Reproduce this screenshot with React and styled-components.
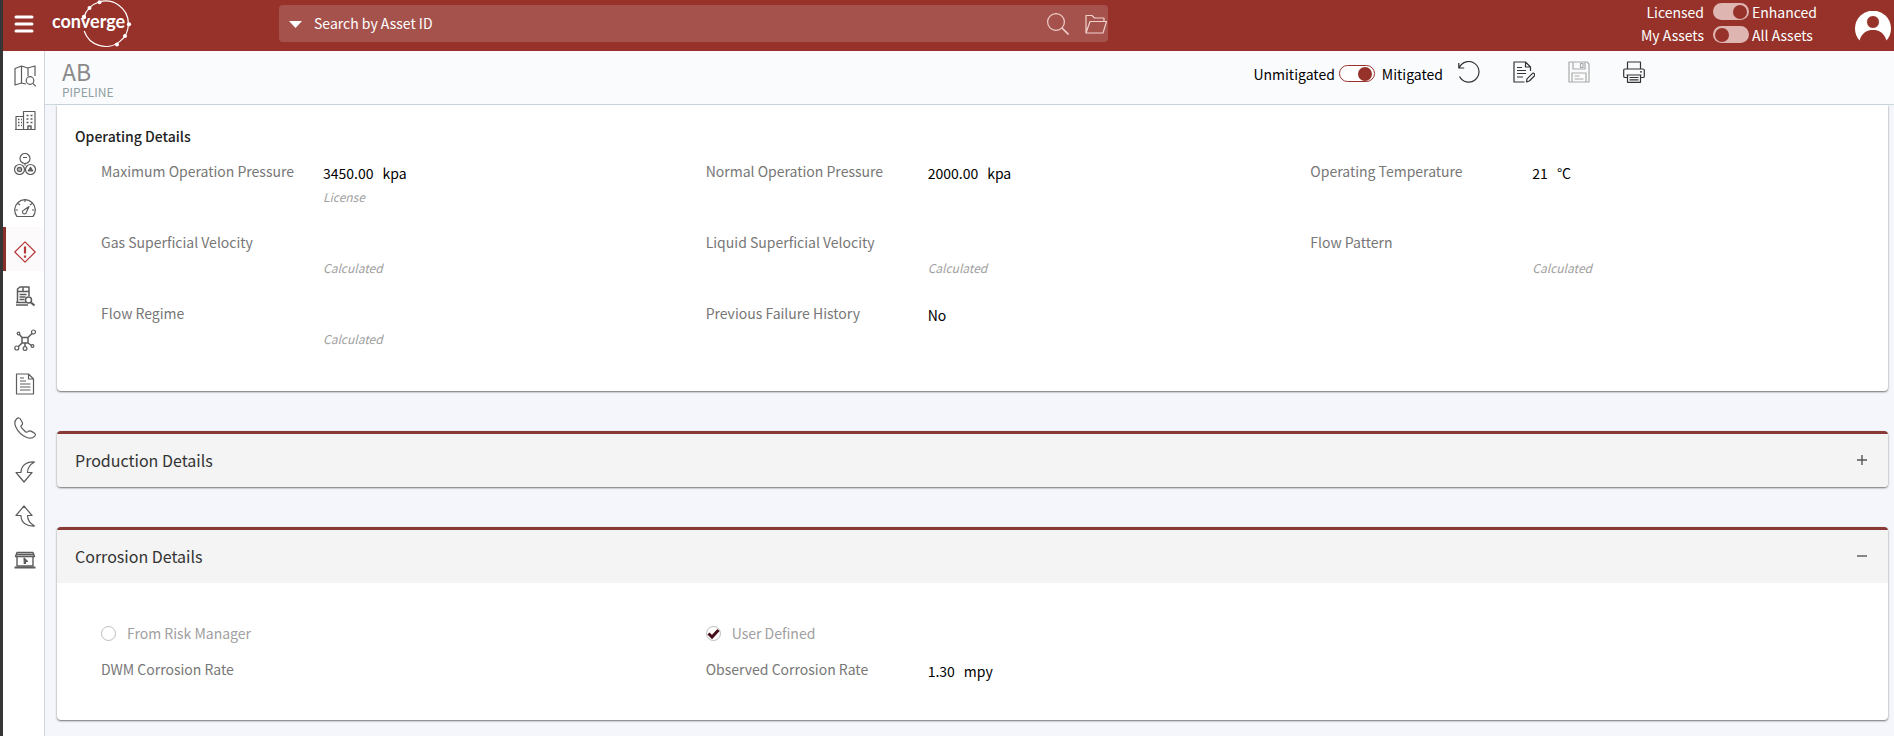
import { useState } from "react";
import styled, { createGlobalStyle } from "styled-components";


const GlobalStyle = createGlobalStyle`
  * {
    box-sizing: border-box;
  }

  body {
    margin: 0;
    background: #f5f6fb;
    color: #000;
    font-family: "Noto Sans CJK SC", "Open Sans", sans-serif;
    font-size: 14px;
    line-height: 20px;
  }

  button, input {
    font: inherit;
    color: inherit;
  }

  svg {
    display: block;
  }
`;

const Page = styled.div`
  display: flex;
  flex-direction: column;
  min-height: 100vh;
  border-left: 3px solid #353535;
`;

const TopBar = styled.header`
  display: flex;
  align-items: center;
  height: 51px;
  padding-right: 3px;
  background: #96322a;
  color: #fff;
`;

const IconButton = styled.button`
  display: flex;
  align-items: center;
  justify-content: center;
  padding: 0;
  border: 0;
  background: none;
  color: ${(props) => props.$color || "inherit"};
  cursor: pointer;

  &:disabled {
    cursor: default;
  }
`;

const MenuButton = styled(IconButton)`
  width: 42px;
  height: 51px;
  padding-bottom: 3px;
`;

const LogoLink = styled.a`
  width: 90px;
  margin-left: 4px;
  color: #fff;
`;

const SearchBox = styled.form`
  display: flex;
  align-items: center;
  flex: 0 1 829px;
  height: 37px;
  margin: 0 auto 4px 140px;
  padding-left: 10px;
  border-radius: 4px;
  background: rgba(255, 255, 255, 0.16);
  color: #f0cfcb;
`;

const SearchInput = styled.input`
  flex: 1;
  min-width: 0;
  height: 37px;
  padding: 0 0 2px 12px;
  border: 0;
  outline: 0;
  background: none;
  color: #fff;

  &::placeholder {
    color: #fff;
    opacity: 1;
  }
`;

const SearchActions = styled.div`
  display: flex;
  gap: 16px;
  padding-right: 1px;
`;

const SwitchGrid = styled.div`
  display: grid;
  grid-template-columns: auto 36px auto;
  grid-auto-rows: 23px;
  align-items: center;
  height: 100%;
  margin-right: 38px;
  white-space: nowrap;
`;

const SwitchLabel = styled.label`
  text-align: ${(props) => (props.$before ? "right" : "left")};
  padding: ${(props) => (props.$before ? "0 9px 0 0" : "0 0 0 3px")};
`;

const Switch = styled.input.attrs({ type: "checkbox", role: "switch" })`
  appearance: none;
  display: flex;
  align-items: center;
  justify-content: ${(props) => (props.checked ? "flex-end" : "flex-start")};
  width: 36px;
  height: 17px;
  margin: 0;
  padding: 0 2px;
  border: ${(props) => (props.$outlined ? "1px solid #96322a" : "0")};
  border-radius: 9px;
  background: ${(props) => (props.$outlined ? "#fff" : "#dfb5b2")};
  cursor: pointer;

  &::before {
    content: "";
    width: 14px;
    height: 14px;
    border-radius: 50%;
    background: #96322a;
  }
`;

const Body = styled.div`
  display: flex;
  flex: 1;
`;

const SideNav = styled.nav`
  width: 42px;
  flex: none;
  border-right: 1px solid #cfd6db;
  background: #fff;
`;

const NavItem = styled.a`
  display: flex;
  justify-content: center;
  height: 44px;
  padding: 14px 0 0 3px;
  background: ${(props) => (props.$active ? "#fcfafa" : "none")};
  box-shadow: ${(props) => (props.$active ? "inset 3px 0 #8b2f2a" : "none")};
  color: ${(props) => (props.$active ? "#b5383a" : "#5c5c5c")};
`;

const Main = styled.main`
  flex: 1;
  min-width: 0;
`;

const AssetBar = styled.div`
  display: flex;
  align-items: center;
  height: 54px;
  padding: 0 249px 0 17px;
  border-bottom: 1px solid #cdd7de;
  background: #fafbfd;
`;

const AssetTitle = styled.div`
  flex: 1;
  padding-top: 2px;
`;

const AssetName = styled.h1`
  margin: 0;
  color: #8a8a8a;
  font-size: 23px;
  font-weight: 400;
  line-height: 26px;
`;

const AssetType = styled.div`
  color: #90a0a4;
  font-size: 12px;
  line-height: 16px;
`;

const Mitigation = styled.div`
  display: flex;
  align-items: center;
  gap: 4px;
  margin-right: 15px;
  padding-bottom: 8px;
`;

const Toolbar = styled.div`
  display: flex;
  gap: 33px;
  padding-bottom: 11px;
`;

const Cards = styled.div`
  display: flex;
  flex-direction: column;
  gap: 40px;
  padding: 0 6px 14px 12px;
`;

const Card = styled.section`
  border-top: ${(props) => (props.$open ? "0" : "3px solid #8a3a36")};
  border-radius: ${(props) => (props.$open ? "0 0 4px 4px" : "4px")};
  background: #fff;
  box-shadow: 0 1px 2px rgba(0, 0, 0, 0.55);
`;

const CardHeader = styled.div`
  display: flex;
  align-items: center;
  justify-content: space-between;
  height: 53px;
  padding: 0 18px 2px;
  border-radius: ${(props) => (props.$expanded ? "0" : "0 0 4px 4px")};
  background: #f4f4f4;
  color: #333;
`;

const CardTitle = styled.h2`
  margin: 0;
  font-size: 16px;
  font-weight: 400;
  line-height: 24px;
`;

const SectionTitle = styled.h3`
  margin: 0;
  padding: 21px 18px 0;
  color: #222;
  font-size: 14px;
  font-weight: 500;
`;

const Fields = styled.dl`
  display: grid;
  grid-template-columns: repeat(3, 1fr);
  grid-auto-rows: ${(props) => props.$row}px;
  margin: 0;
  padding: ${(props) => props.$pad};
`;

const FieldBox = styled.div`
  display: flex;
  padding-left: 30px;
`;

const FieldName = styled.dt`
  width: 222px;
  flex: none;
  color: #777;
`;

const FieldValue = styled.dd`
  margin: 0;
  padding-top: 2px;
`;

const Amount = styled.div`
  display: flex;
  gap: 9px;
  height: 20px;
`;

const Source = styled.div`
  color: #a0a0a0;
  font-size: 12px;
  font-style: italic;
  line-height: 28px;
`;

const Choices = styled.div`
  display: grid;
  grid-template-columns: repeat(3, 1fr);
  padding: 40px 3px 0 14px;
`;

const Choice = styled.label`
  display: flex;
  align-items: center;
  gap: 11px;
  padding-left: 30px;
  color: #a0a0a0;
`;

const RadioBox = styled.span`
  display: grid;
  place-items: center;

  > * {
    grid-area: 1 / 1;
  }
`;

const Radio = styled.input.attrs({ type: "radio" })`
  appearance: none;
  width: 15px;
  height: 15px;
  margin: 0;
  border: 1px solid #bdbdbd;
  border-radius: 50%;
  background: #fff;
`;

const Icon = ({ size = 22, width = 1.2, children }) => (
  <svg
    width={size}
    height={size}
    viewBox="0 0 22 22"
    fill="none"
    stroke="currentColor"
    strokeWidth={width}
    strokeLinejoin="round"
    aria-hidden="true"
  >
    {children}
  </svg>
);

const Logo = () => (
  <svg width="90" height="51" viewBox="0 0 90 51" role="img" aria-label="converge">
    <path
      d="M35.200 31A22.700 22.700 0 1 0 35 17"
      fill="none"
      stroke="#fff"
      strokeWidth="1.200"
    />
    <g fill="#fff">
      <circle cx="35" cy="17" r="2.200" />
      <circle cx="40.500" cy="8" r="2" />
      <circle cx="50.500" cy="2.300" r="2" />
      <circle cx="80" cy="24.300" r="2.100" />
      <circle cx="76" cy="36" r="2" />
      <circle cx="68" cy="44.500" r="2" />
      <text x="3" y="28" fontFamily="Lato, sans-serif" fontSize="18" fontWeight="700">
        converge
      </text>
    </g>
  </svg>
);

const navItems = [
  {
    label: "Map",
    icon: (
      <>
        <path d="M12 19 7.500 18 1 20V3.500L7.500 1l6 2L21 1v10M7.500 1v17M14 3v8" />
        <circle cx="16" cy="15.500" r="3.800" />
        <path d="m18.800 18.300 3 3" />
      </>
    ),
  },
  {
    label: "Facilities",
    icon: (
      <>
        <path d="M2 20.500V7.500h7.500M9.500 20.500v-18H21v18zM1 20.500h20" />
        <path d="M4 10.500h1.500M7 10.500h1M4 13.500h1.500M7 13.500h1M4 16.500h1.500M7 16.500h1M12.500 6.500h2M16.500 6.500h2M12.500 10h2M16.500 10h2M12.500 13.500h2M16.500 13.500h2M14 20v-3h3v3" strokeWidth="1.500" />
      </>
    ),
  },
  {
    label: "Groups",
    icon: (
      <>
        <circle cx="11" cy="5.500" r="5" />
        <circle cx="5.500" cy="16.500" r="5" />
        <circle cx="16.500" cy="16.500" r="5" />
        <path d="M9 4.500h4M11 10.500v2" />
        <circle cx="5.500" cy="16.500" r="2.200" fill="currentColor" fillOpacity="0.5" />
        <path d="m14.300 17.800 2.200-3.600 2.200 3.600z" fill="currentColor" />
      </>
    ),
  },
  {
    label: "Dashboard",
    icon: (
      <>
        <path d="M3 19.500A10.300 10.300 0 1 1 19 19.500z" />
        <path d="M11 2v3M4 6.500l2 1.500M18 6.500l-2 1.500M1.500 13h2.500M20.500 13H18" />
        <path d="M15 9.500 10 13a2 2 0 1 0 2.500 2z" />
      </>
    ),
  },
  {
    label: "Risk",
    active: true,
    icon: (
      <>
        <path d="M11 .8 21.200 11 11 21.200.800 11z" />
        <path d="M11 5.500v7" strokeWidth="2.200" />
        <path d="M11 14.500v2.200" strokeWidth="2.200" />
      </>
    ),
  },
  {
    label: "Reports",
    icon: (
      <>
        <path d="M3.500 17V4l2.500-2h9v9M2 17.500h10M2 20h12" strokeWidth="1.500" />
        <path d="M3.500 6.500h11.500M5.500 9.500h7M5.500 12h6M5.500 14.500h5M9 2v4" strokeWidth="1.500" />
        <circle cx="14.500" cy="15" r="3" strokeWidth="1.500" />
        <path d="m17 17.500 3.500 3" strokeWidth="2.200" />
      </>
    ),
  },
  {
    label: "Network",
    icon: (
      <>
        <path d="M8 8.500h6v5.500H8zM14 8.500l4-4M8 8.500l-2.500-3M8 14l-4 4M14 14l3.500 2.500M11 14v3.500" strokeWidth="1.500" />
        <circle cx="19.500" cy="3" r="2" />
        <circle cx="4.500" cy="4.500" r="1.300" />
        <circle cx="2.800" cy="19" r="2" />
        <circle cx="11" cy="19.500" r="1.900" />
        <circle cx="18.500" cy="17" r="1.400" />
      </>
    ),
  },
  {
    label: "Documents",
    icon: (
      <>
        <path d="M2.500 1h12l5 5v15h-17zM14.500 1v5h5" />
        <path d="M6 8h6M6 11h10.500M6 14h10.500M6 17h10.500M6 5h4" />
      </>
    ),
  },
  {
    label: "Contacts",
    icon: (
      <path d="M2.500 2C4 .5 5.700.700 6.500 2.200L8.300 5.500c.6 1.200.2 2-.7 2.800-.9.800-.8 1.600 0 2.600l3.600 3.600c1 .9 1.900 1 2.700.2.900-1 1.800-1.200 3-.6l3.300 1.800c1.500.9 1.500 2.300.3 3.500-2 2-4.900 2.300-8.200.9-4.500-2-8.500-6-10.600-10.600C.400 6.700.600 4 2.500 2z" />
    ),
  },
  {
    label: "Import",
    icon: <path d="M20.500 1C13 .5 7 4 7 11.500H2L10 21l8-9.500h-4.500C13.500 7 16 3.500 20.500 1z" />,
  },
  {
    label: "Export",
    icon: <path d="M20.500 21C13 21.500 7 18 7 10.500H2L10 1l8 9.500h-4.500C13.500 15 16 18.500 20.500 21z" />,
  },
  {
    label: "Console",
    icon: (
      <>
        <path d="M3 3.500h16l1.500 4h-19zM3 7.500v9.500h16V7.500M2 5.500h18" strokeWidth="1.400" />
        <path d="M.5 18.500h21" strokeWidth="2" />
        <path d="m10 9 3.500 3.500h-2v2h-1.200z" fill="currentColor" />
      </>
    ),
  },
];

const operatingFields = [
  { name: "Maximum Operation Pressure", value: "3450.00", unit: "kpa", source: "License" },
  { name: "Normal Operation Pressure", value: "2000.00", unit: "kpa" },
  { name: "Operating Temperature", value: "21", unit: "°C" },
  { name: "Gas Superficial Velocity", source: "Calculated" },
  { name: "Liquid Superficial Velocity", source: "Calculated" },
  { name: "Flow Pattern", source: "Calculated" },
  { name: "Flow Regime", source: "Calculated" },
  { name: "Previous Failure History", value: "No" },
];

const corrosionFields = [
  { name: "DWM Corrosion Rate" },
  { name: "Observed Corrosion Rate", value: "1.30", unit: "mpy" },
];

const Field = ({ name, value, unit, source }) => (
  <FieldBox>
    <FieldName>{name}</FieldName>
    <FieldValue>
      <Amount>
        {value && <span>{value}</span>}
        {unit && <span>{unit}</span>}
      </Amount>
      {source && <Source>{source}</Source>}
    </FieldValue>
  </FieldBox>
);

const App = () => {
  const [enhanced, setEnhanced] = useState(true);
  const [allAssets, setAllAssets] = useState(false);
  const [mitigated, setMitigated] = useState(true);

  return (
    <Page>
      <GlobalStyle />
      <TopBar>
        <MenuButton aria-label="Menu">
          <svg width="20" height="18" viewBox="0 0 20 18" stroke="#fff" strokeWidth="3" strokeLinecap="round">
            <path d="M2 2h16M2 9h16M2 16h16" />
          </svg>
        </MenuButton>
        <LogoLink href="#home">
          <Logo />
        </LogoLink>
        <SearchBox onSubmit={(e) => e.preventDefault()}>
          <IconButton type="button" aria-label="Search type" $color="#fff">
            <svg width="13" height="8" viewBox="0 0 13 8" fill="currentColor">
              <path d="M0 1h13L6.500 8z" />
            </svg>
          </IconButton>
          <SearchInput aria-label="Search by Asset ID" placeholder="Search by Asset ID" />
          <SearchActions>
            <IconButton aria-label="Search">
              <Icon>
                <circle cx="9" cy="9" r="8.400" />
                <path d="m15 15 6.500 6.500" strokeWidth="1.600" />
              </Icon>
            </IconButton>
            <IconButton type="button" aria-label="Open folder">
              <Icon>
                <path d="M1 20V2.500h6l2.500 2.500H19v3.500M1 20 5 8.500h16.500L18 20z" />
              </Icon>
            </IconButton>
          </SearchActions>
        </SearchBox>
        <SwitchGrid>
          <SwitchLabel htmlFor="enhanced" $before>Licensed</SwitchLabel>
          <Switch id="enhanced" checked={enhanced} onChange={() => setEnhanced(!enhanced)} />
          <SwitchLabel htmlFor="enhanced">Enhanced</SwitchLabel>
          <SwitchLabel htmlFor="all-assets" $before>My Assets</SwitchLabel>
          <Switch id="all-assets" checked={allAssets} onChange={() => setAllAssets(!allAssets)} />
          <SwitchLabel htmlFor="all-assets">All Assets</SwitchLabel>
        </SwitchGrid>
        <IconButton aria-label="Account">
          <svg width="36" height="30" viewBox="0 0 36 30">
            <path d="M4.500 29.500A18 18 0 1 1 31.500 29.500C29 21.500 24 19 18 19S7 21.500 4.500 29.500z" fill="#fff" />
            <circle cx="18" cy="11" r="6.500" fill="#96322a" stroke="#fff" />
          </svg>
        </IconButton>
      </TopBar>
      <Body>
        <SideNav>
          {navItems.map((item) => (
            <NavItem key={item.label} href={`#${item.label.toLowerCase()}`} aria-label={item.label} $active={item.active}>
              <Icon>{item.icon}</Icon>
            </NavItem>
          ))}
        </SideNav>
        <Main>
          <AssetBar>
            <AssetTitle>
              <AssetName>AB</AssetName>
              <AssetType>PIPELINE</AssetType>
            </AssetTitle>
            <Mitigation>
              <label htmlFor="mitigated">Unmitigated</label>
              <Switch id="mitigated" $outlined checked={mitigated} onChange={() => setMitigated(!mitigated)} />
              <SwitchLabel htmlFor="mitigated">Mitigated</SwitchLabel>
            </Mitigation>
            <Toolbar>
              <IconButton aria-label="Reset" $color="#333">
                <Icon>
                  <path d="M1.300 6.500A10.300 10.300 0 1 1 1.500 15.500M.800 2v5h5.400" />
                </Icon>
              </IconButton>
              <IconButton aria-label="Edit" $color="#333">
                <Icon>
                  <path d="M17.500 10V6l-5-5H1v20h10.500M12.500 1v5h5M4 6.500h5M4 9.500h9M4 12.500h9M4 16h6" />
                  <path d="m13.500 20.800.5-3 5-5a1.500 1.500 0 0 1 2.300 2.200l-5 5z" />
                </Icon>
              </IconButton>
              <IconButton aria-label="Save" disabled $color="#aaa">
                <Icon>
                  <path d="M1 1h18l2 2v18H1zM5 1v7h12V1M12.500 2.500h2.500v4h-2.500zM4 21v-9h14v9M6.500 15h5M6.500 18h9" />
                </Icon>
              </IconButton>
              <IconButton aria-label="Print" $color="#333">
                <Icon>
                  <path d="M4.500 8V1h13v7M4.500 16.500H2a1.300 1.300 0 0 1-1.300-1.300V9.300A1.300 1.300 0 0 1 2 8h18a1.300 1.300 0 0 1 1.300 1.300v5.900a1.300 1.300 0 0 1-1.300 1.300h-2.500M3.500 14h15M4.500 14v7.300h13V14M6.500 16.500h9M6.500 18.800h9M17 10.800h2" />
                </Icon>
              </IconButton>
            </Toolbar>
          </AssetBar>
          <Cards>
            <Card $open>
              <SectionTitle>Operating Details</SectionTitle>
              <Fields $row={71} $pad="15px 3px 17px 14px">
                {operatingFields.map((field) => (
                  <Field key={field.name} {...field} />
                ))}
              </Fields>
            </Card>
            <Card>
              <CardHeader>
                <CardTitle>Production Details</CardTitle>
                <IconButton aria-label="Expand Production Details" aria-expanded="false">
                  <svg width="16" height="16" viewBox="0 0 16 16" stroke="#555" strokeWidth="1.400">
                    <path d="M3 8h10M8 3v10" />
                  </svg>
                </IconButton>
              </CardHeader>
            </Card>
            <Card>
              <CardHeader $expanded>
                <CardTitle>Corrosion Details</CardTitle>
                <IconButton aria-label="Collapse Corrosion Details" aria-expanded="true">
                  <svg width="16" height="16" viewBox="0 0 16 16" stroke="#555" strokeWidth="1.400">
                    <path d="M3 8h10" />
                  </svg>
                </IconButton>
              </CardHeader>
              <Choices>
                <Choice>
                  <RadioBox>
                    <Radio name="source" disabled />
                  </RadioBox>
                  From Risk Manager
                </Choice>
                <Choice>
                  <RadioBox>
                    <Radio name="source" defaultChecked disabled />
                    <svg width="13" height="13" viewBox="0 0 13 13" fill="none" stroke="#45101a" strokeWidth="3">
                      <path d="m1.500 6.500 3.500 3.500 6.500-7" />
                    </svg>
                  </RadioBox>
                  User Defined
                </Choice>
              </Choices>
              <Fields $row={37} $pad="16px 3px 24px 14px">
                {corrosionFields.map((field) => (
                  <Field key={field.name} {...field} />
                ))}
              </Fields>
            </Card>
          </Cards>
        </Main>
      </Body>
    </Page>
  );
};

export default App;
